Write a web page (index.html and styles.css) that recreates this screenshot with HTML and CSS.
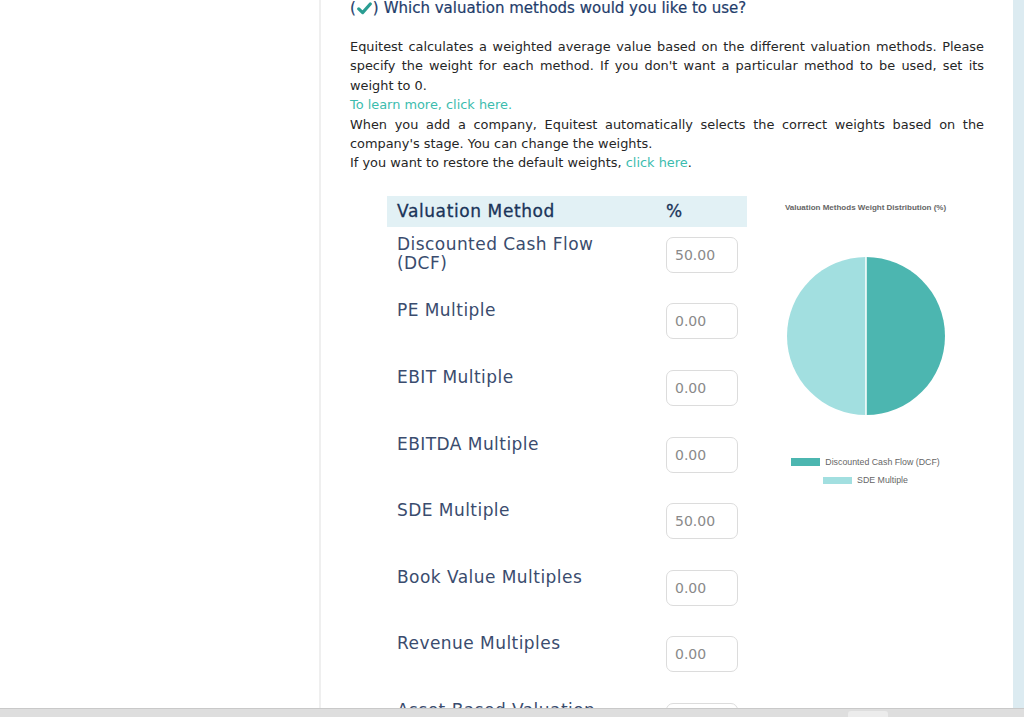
FILE: index.html
```html
<!DOCTYPE html>
<html lang="en">
<head>
<meta charset="utf-8">
<title>Valuation methods</title>
<link rel="stylesheet" href="styles.css">
</head>
<body>
<div class="page">
  <aside class="sidebar"></aside>
  <main class="main">
    <h2 class="question">
      <span class="paren">(</span><svg class="check" viewBox="0 0 16 14" width="15" height="13"><path d="M1.8 7.4 L6 11.4 L14.2 2.2" fill="none" stroke="#2a9d92" stroke-width="3.4" stroke-linecap="round" stroke-linejoin="round"/></svg><span class="paren close">)</span> Which valuation methods would you like to use?
    </h2>
    <div class="intro">
      <p class="just">Equitest calculates a weighted average value based on the different valuation methods. Please specify the weight for each method. If you don't want a particular method to be used, set its weight to 0.</p>
      <p><a class="link" href="#">To learn more, click here.</a></p>
      <p class="just">When you add a company, Equitest automatically selects the correct weights based on the company's stage. You can change the weights.</p>
      <p>If you want to restore the default weights, <a class="link" href="#">click here</a>.</p>
    </div>
    <div class="methods">
      <div class="table">
        <div class="thead">
          <div class="th th-name">Valuation Method</div>
          <div class="th th-pct">%</div>
        </div>
        <div class="row"><div class="name">Discounted Cash Flow (DCF)</div><div class="cell"><input class="weight" type="text" value="50.00"></div></div>
        <div class="row"><div class="name">PE Multiple</div><div class="cell"><input class="weight" type="text" value="0.00"></div></div>
        <div class="row"><div class="name">EBIT Multiple</div><div class="cell"><input class="weight" type="text" value="0.00"></div></div>
        <div class="row"><div class="name">EBITDA Multiple</div><div class="cell"><input class="weight" type="text" value="0.00"></div></div>
        <div class="row"><div class="name">SDE Multiple</div><div class="cell"><input class="weight" type="text" value="50.00"></div></div>
        <div class="row"><div class="name">Book Value Multiples</div><div class="cell"><input class="weight" type="text" value="0.00"></div></div>
        <div class="row"><div class="name">Revenue Multiples</div><div class="cell"><input class="weight" type="text" value="0.00"></div></div>
        <div class="row"><div class="name">Asset-Based Valuation</div><div class="cell"><input class="weight" type="text" value="0.00"></div></div>
      </div>
      <div class="chart">
        <div class="chart-title">Valuation Methods Weight Distribution (%)</div>
        <svg class="pie" viewBox="0 0 160 160" width="160" height="160">
          <path d="M80 1 A79 79 0 0 1 80 159 Z" fill="#4cb6b0"/>
          <path d="M80 1 A79 79 0 0 0 80 159 Z" fill="#a2dfe0"/>
          <line x1="80" y1="1" x2="80" y2="159" stroke="#ffffff" stroke-width="1.5"/>
        </svg>
        <div class="legend">
          <div class="legend-item"><span class="swatch dark"></span>Discounted Cash Flow (DCF)</div>
          <div class="legend-item"><span class="swatch light"></span>SDE Multiple</div>
        </div>
      </div>
    </div>
  </main>
  <div class="edge"></div>
</div>
<div class="hscroll"><span class="thumb"></span></div>
</body>
</html>
```
FILE: styles.css
```css
html, body {
  margin: 0;
  padding: 0;
  height: 100%;
  overflow: hidden;
  background: #ffffff;
}
body {
  font-family: "DejaVu Sans", sans-serif;
}
.page {
  display: flex;
  height: 717px;
}
.sidebar {
  width: 319px;
  flex: none;
  border-right: 2px solid #efefef;
}
.main {
  flex: 1;
  padding: 0 29px 0 29px;
  overflow: hidden;
}
.edge {
  width: 11px;
  flex: none;
  background: #dcebf1;
}
.question {
  margin: 0;
  font-size: 15px;
  line-height: 17px;
  font-weight: normal;
  color: #1f3d6b;
  -webkit-text-stroke: 0.2px #1f3d6b;
  display: flex;
  align-items: center;
  white-space: nowrap;
}
.paren { color: #1f3d6b; }
.check { margin: 0 1px; }
.close { margin-right: 5px; }
.intro {
  margin-top: 20px;
  font-family: "DejaVu Sans", sans-serif;
  font-size: 12.9px;
  line-height: 19.4px;
  color: #262626;
}
.intro p { margin: 0; }
.just { text-align: justify; }
.link { color: #3bbcae; text-decoration: none; }
.methods {
  display: flex;
  margin-top: 23px;
}
.table {
  width: 360px;
  margin-left: 37px;
  flex: none;
}
.thead {
  display: flex;
  height: 31px;
  align-items: center;
  background: #e2f1f5;
}
.th {
  font-size: 17px;
  color: #1a3459;
  letter-spacing: 0.6px;
  -webkit-text-stroke: 0.3px #1a3459;
}
.th-name { width: 269px; padding-left: 10px; }
.row {
  display: flex;
  height: 66.6px;
}
.name {
  width: 230px;
  padding: 8px 0 0 10px;
  margin-right: 39px;
  font-size: 17px;
  line-height: 19px;
  letter-spacing: 0.45px;
  color: #3a4c6e;
}
.cell { padding-top: 10px; }
.weight {
  box-sizing: border-box;
  width: 72px;
  height: 36px;
  border: 1px solid #dcdcdc;
  border-radius: 7px;
  padding: 0 0 0 8px;
  font-family: "DejaVu Sans", sans-serif;
  font-size: 14px;
  color: #8a8a8a;
  background: #ffffff;
  outline: none;
}
.chart {
  width: 195px;
  margin-left: 21px;
  flex: none;
  display: flex;
  flex-direction: column;
  align-items: center;
  font-family: "Liberation Sans", Arial, sans-serif;
  color: #666666;
}
.chart-title {
  margin-top: 7px;
  font-size: 8px;
  font-weight: bold;
  line-height: 10px;
}
.pie {
  margin-top: 43px;
}
.legend {
  margin-top: 41px;
  display: flex;
  flex-direction: column;
  align-items: center;
  gap: 7px;
  font-size: 8.8px;
  line-height: 11px;
}
.legend-item {
  display: flex;
  align-items: center;
}
.swatch {
  display: inline-block;
  width: 29px;
  height: 8px;
  margin-right: 5px;
}
.swatch.dark { background: #4cb6b0; }
.swatch.light { background: #a2dfe0; height: 7px; }
.hscroll {
  position: fixed;
  left: 0;
  right: 0;
  bottom: 0;
  height: 8px;
  background: #dedede;
  border-top: 1px solid #c9c9c9;
}
.thumb {
  position: absolute;
  left: 848px;
  top: 2px;
  width: 40px;
  height: 6px;
  border-radius: 3px 3px 0 0;
  background: #ececec;
}
```
